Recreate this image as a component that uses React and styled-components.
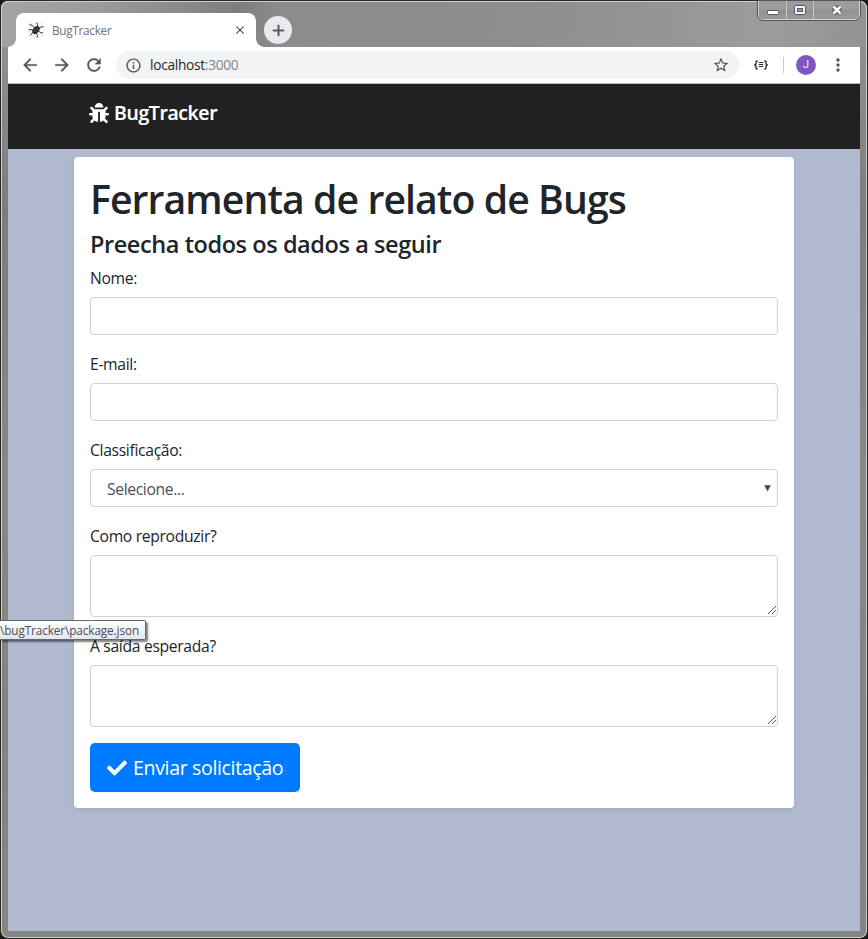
import React from 'react';
import styled, { createGlobalStyle } from 'styled-components';
import { FaBug, FaCheck } from 'react-icons/fa';
import {
  MdArrowBack,
  MdArrowForward,
  MdRefresh,
  MdInfoOutline,
  MdStarBorder,
  MdMoreVert,
  MdClose,
  MdAdd,
} from 'react-icons/md';

const GlobalStyle = createGlobalStyle`
  *, *::before, *::after { box-sizing: border-box; }
  body {
    margin: 0;
    font-family: 'Open Sans', 'Noto Sans', sans-serif;
    color: #212529;
    background: #18191b;
    overflow: hidden;
  }
`;

const WindowFrame = styled.div`
  position: relative;
  width: 868px;
  height: 939px;
  padding: 0 7px 7px;
  display: flex;
  flex-direction: column;
  border: 1px solid #2b2729;
  border-radius: 8px;
  background: linear-gradient(180deg, #969696 0, #8c8c8c 80px, #7c7c7b 210px, #888885 480px, #828280 720px, #858583 100%);
  box-shadow: inset 0 0 0 1px #cfcfcf;
`;

const TitleBar = styled.header`
  flex: none;
  height: 46px;
  margin: 0 -7px;
  padding-left: 14px;
  display: flex;
  align-items: flex-end;
  border: 1px solid #cfcfcf;
  border-bottom: 0;
  border-radius: 7px 7px 0 0;
  background: linear-gradient(100deg, #a4a4a4 0, #9c9c9c 90px, #858585 200px, #7d7d7d 235px, #8c8c8c 275px, #8d8d8d 500px, #929292 600px, #9c9c9c 760px, #939393 100%);
`;

const Tab = styled.div`
  position: relative;
  width: 240px;
  height: 34px;
  padding: 0 9px 0 12px;
  display: flex;
  align-items: center;
  background: #fff;
  border-radius: 8px 8px 0 0;

  &::before,
  &::after {
    content: '';
    position: absolute;
    bottom: 0;
    width: 8px;
    height: 8px;
  }
  &::before {
    left: -8px;
    background: radial-gradient(circle at 0 0, transparent 7.5px, #fff 8px);
  }
  &::after {
    right: -8px;
    background: radial-gradient(circle at 100% 0, transparent 7.5px, #fff 8px);
  }
`;

const TabTitle = styled.span`
  flex: 1;
  margin-left: 8px;
  font-size: 11.8px;
  line-height: 16px;
  letter-spacing: -0.3px;
  color: #6f7276;
`;

const NewTab = styled.div`
  width: 28px;
  height: 28px;
  margin: 0 0 3px 8px;
  display: grid;
  place-items: center;
  color: #53575b;
  background: #e8eaed;
  border-radius: 50%;

  path:not([fill='none']) { stroke: currentColor; stroke-width: 0.4; }
`;

const CaptionButtons = styled.div`
  align-self: flex-start;
  display: flex;
  height: 19px;
  margin: -1px 6px 0 auto;
  border: 1px solid #d0d0d0;
  border-top: 0;
  border-radius: 0 0 5px 5px;
  outline: 1px solid #55565a;
  overflow: hidden;
`;

const CaptionButton = styled.div`
  width: ${({ $width }) => $width}px;
  display: grid;
  place-items: center;
  background: linear-gradient(#9c9c9c 0 45%, #929292 50%, #999);

  & + & { border-left: 1px solid #c8c8c8; }
`;

const Toolbar = styled.nav`
  flex: none;
  height: 37px;
  padding-left: 12px;
  display: flex;
  align-items: center;
  background: #fff;
  border-bottom: 1px solid #b6b6b6;
  color: #53575b;
`;

const ToolButton = styled.span`
  width: 20px;
  height: 20px;
  margin-right: 12px;
  display: grid;
  place-items: center;

  path:not([fill='none']) { stroke: currentColor; stroke-width: 0.3; }
`;

const AddressBar = styled.div`
  width: 623px;
  height: 28px;
  margin-right: 15px;
  padding: 0 9px;
  display: flex;
  align-items: center;
  background: #f1f3f4;
  border-radius: 14px;
`;

const Address = styled.span`
  flex: 1;
  margin-left: 8px;
  font-size: 13.7px;
  line-height: 20px;
  letter-spacing: -0.28px;
  color: #25282b;
`;

const Port = styled.span`
  color: #80858a;
`;

const Divider = styled.span`
  width: 1px;
  height: 16px;
  margin: 0 12px 0 15px;
  background: #c9cbce;
`;

const Avatar = styled.span`
  width: 20px;
  height: 20px;
  margin-right: 12px;
  border-radius: 50%;
  background: #7e57c2;
  color: #f3eefa;
  font: 11px/20px Roboto, sans-serif;
  text-align: center;
`;

const Page = styled.main`
  flex: 1;
  display: flex;
  flex-direction: column;
  background: #b1b9cf;
`;

const Navbar = styled.div`
  flex: none;
  height: 65px;
  padding: 14px 80px 0 81px;
  display: flex;
  align-items: flex-start;
  background: #212121;
  color: #fff;
`;

const Brand = styled.span`
  display: flex;
  align-items: center;
  gap: 5px;
  font-size: 19.4px;
  font-weight: 600;
  line-height: 30px;
  letter-spacing: -0.35px;
  -webkit-text-stroke: 0.2px #fff;
`;

const Card = styled.form`
  width: 720px;
  height: 651px;
  margin: 8px auto 0;
  padding: 18px 16px 15px;
  background: #fff;
  border-radius: 4px;
  box-shadow: 0 2px 4px rgba(0, 0, 0, 0.075);
`;

const Title = styled.h1`
  margin: 0 0 7px;
  font-size: 39.2px;
  font-weight: 600;
  line-height: 48px;
  letter-spacing: -0.93px;
  white-space: nowrap;
`;

const Subtitle = styled.h2`
  margin: 0 0 7px;
  font-size: 23.5px;
  font-weight: 600;
  line-height: 28px;
  letter-spacing: -0.42px;
  white-space: nowrap;
`;

const FieldList = styled.div`
  display: grid;
  gap: 16px;
  margin-bottom: 16px;
`;

const Field = styled.div`
  display: grid;
  gap: 7px;
`;

const Label = styled.label`
  padding-top: 1px;
  font-size: 15.7px;
  line-height: 24px;
  letter-spacing: -0.33px;
`;

const Control = styled.div`
  height: ${({ $tall }) => ($tall ? 62 : 38)}px;
  padding: ${({ $tall }) => ($tall ? '0 1px 1px 0' : '0 6px 0 16px')};
  display: flex;
  align-items: ${({ $tall }) => ($tall ? 'flex-end' : 'center')};
  justify-content: ${({ $tall }) => ($tall ? 'flex-end' : 'space-between')};
  border: 1px solid #ced4da;
  border-radius: 4px;
  color: #495057;
`;

const SelectedValue = styled.span`
  padding-top: 2px;
  font-size: 15.7px;
  line-height: 24px;
  letter-spacing: -0.37px;
`;

const SubmitButton = styled.button`
  width: 210px;
  height: 49px;
  padding: 0 0 0 17px;
  display: flex;
  align-items: center;
  gap: 6px;
  border: 0;
  border-radius: 5px;
  background: #007bff;
  color: #fff;
  font-family: inherit;
  font-size: 19.6px;
  line-height: 30px;
  letter-spacing: -0.37px;
  white-space: nowrap;
`;

const PathTooltip = styled.div`
  position: absolute;
  left: -1px;
  top: 619px;
  width: 146px;
  height: 20px;
  border: 1px solid #66666b;
  border-left: 0;
  border-radius: 0 2px 2px 0;
  background: linear-gradient(#fff, #e4e5f0);
  box-shadow: 2px 2px 2px rgba(0, 0, 0, 0.5);
  color: #4c4c52;
  font-size: 11.8px;
  line-height: 18px;
  letter-spacing: -0.12px;
  white-space: nowrap;
`;

const BugFavicon = () => (
  <svg width="16" height="16" viewBox="0 0 16 16">
    <rect width="16" height="16" fill="#f6f6f6" />
    <g fill="none" stroke="#3c3c3c" strokeWidth="1">
      <path d="M6.5 6 L4.5 3.5 L1.5 2.5 M6 8.5 L3 7.5 L.5 8 M6 10 L3.5 11.5 L2.5 13.5 M9.5 5 L9.5 2.5 L8.5 .5 M10.5 6.5 L13 5 L15.5 4.8 M10.5 9 L12.5 10.5 L15 11 M8.5 11 L9.5 13.5 L9 15.5" />
    </g>
    <ellipse cx="8" cy="8" rx="3" ry="4.4" transform="rotate(38 8 8)" fill="#262626" />
    <path d="M6.5 10 L10 6" stroke="#8a8a8a" strokeWidth=".7" />
  </svg>
);

const JsonIcon = () => (
  <svg width="14" height="10" viewBox="0 0 14 10" fill="none" stroke="#222">
    <path d="M3.7 1 H3 Q2 1 2 2 V4 L.8 5 L2 6 V8 Q2 9 3 9 H3.7 M10.3 1 H11 Q12 1 12 2 V4 L13.2 5 L12 6 V8 Q12 9 11 9 H10.3" strokeWidth="1.3" />
    <path d="M4.8 2.5 H9.2 M4.8 4.5 H9.2 M4.8 6.5 H9.2" strokeWidth="1" />
  </svg>
);

const MinimizeIcon = () => (
  <svg width="14" height="14">
    <rect x="1.5" y="7.5" width="11" height="4" rx="1" fill="#fff" stroke="#53546b" />
  </svg>
);

const MaximizeIcon = () => (
  <svg width="14" height="14">
    <rect x="1.5" y="2.5" width="11" height="9" rx="1" fill="#f5f5f5" stroke="#53546b" />
    <rect x="4.5" y="5.5" width="5" height="3" fill="#9b9b9b" stroke="#53546b" />
  </svg>
);

const CloseIcon = () => (
  <svg width="14" height="14">
    <path d="M3.5 3.5 L10.5 10.5 M10.5 3.5 L3.5 10.5" stroke="#53546b" strokeWidth="4.6" />
    <path d="M3.5 3.5 L10.5 10.5 M10.5 3.5 L3.5 10.5" stroke="#fff" strokeWidth="2.6" />
  </svg>
);

const ResizeGrip = () => (
  <svg width="9" height="9" shapeRendering="crispEdges">
    <path d="M.5 8.5 L8.5 .5 M4.5 8.5 L8.5 4.5" stroke="#55585c" fill="none" />
  </svg>
);

const SelectArrow = () => (
  <svg width="7" height="7">
    <path d="M.2 .3 H6.8 L3.5 6.6 Z" fill="#45494d" />
  </svg>
);

const fields = [
  { label: 'Nome:' },
  { label: 'E-mail:' },
  { label: 'Classificação:', select: 'Selecione...' },
  { label: 'Como reproduzir?', tall: true },
  { label: 'A saída esperada?', tall: true },
];

export default function App() {
  return (
    <>
      <GlobalStyle />
      <WindowFrame>
        <TitleBar>
          <Tab>
            <BugFavicon />
            <TabTitle>BugTracker</TabTitle>
            <MdClose size={14} color="#4d5155" />
          </Tab>
          <NewTab>
            <MdAdd size={19} />
          </NewTab>
          <CaptionButtons>
            <CaptionButton $width={27}><MinimizeIcon /></CaptionButton>
            <CaptionButton $width={27}><MaximizeIcon /></CaptionButton>
            <CaptionButton $width={46}><CloseIcon /></CaptionButton>
          </CaptionButtons>
        </TitleBar>
        <Toolbar>
          <ToolButton><MdArrowBack size={20} /></ToolButton>
          <ToolButton><MdArrowForward size={20} /></ToolButton>
          <ToolButton><MdRefresh size={20} /></ToolButton>
          <AddressBar>
            <MdInfoOutline size={17} />
            <Address>localhost<Port>:3000</Port></Address>
            <MdStarBorder size={18} />
          </AddressBar>
          <JsonIcon />
          <Divider />
          <Avatar>J</Avatar>
          <MdMoreVert size={20} />
        </Toolbar>
        <Page>
          <Navbar>
            <Brand>
              <FaBug size={20} />
              BugTracker
            </Brand>
          </Navbar>
          <Card>
            <Title>Ferramenta de relato de Bugs</Title>
            <Subtitle>Preecha todos os dados a seguir</Subtitle>
            <FieldList>
              {fields.map(({ label, select, tall }) => (
                <Field key={label}>
                  <Label>{label}</Label>
                  <Control $tall={tall}>
                    {select && (
                      <>
                        <SelectedValue>{select}</SelectedValue>
                        <SelectArrow />
                      </>
                    )}
                    {tall && <ResizeGrip />}
                  </Control>
                </Field>
              ))}
            </FieldList>
            <SubmitButton type="button">
              <FaCheck size={20} />
              Enviar solicitação
            </SubmitButton>
          </Card>
        </Page>
        <PathTooltip>\bugTracker\package.json</PathTooltip>
      </WindowFrame>
    </>
  );
}
